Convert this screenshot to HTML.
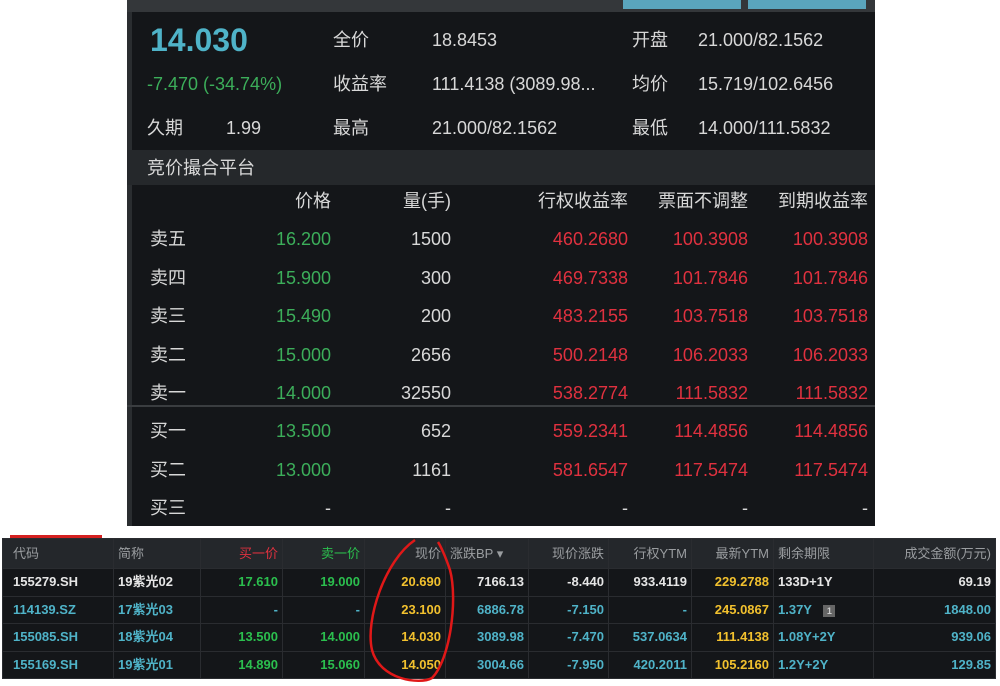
<!DOCTYPE html>
<html><head><meta charset="utf-8"><style>
*{margin:0;padding:0;box-sizing:border-box}
body{width:1000px;height:686px;background:#fff;position:relative;overflow:hidden;font-family:"Liberation Sans","Noto Sans CJK SC",sans-serif}
.p{position:absolute;left:127px;top:0;width:748px;height:526px;background:#141619;border-left:5px solid #2a2d30}
.t{position:absolute;white-space:nowrap;font-size:18px;line-height:22px;height:22px;color:#d8d8d8}
.r{text-align:right}
.g{color:#3cae5a}.rd{color:#e0313f}
table{position:absolute;left:2px;top:538px;width:994px;border-collapse:collapse;font-size:13px;line-height:16px;font-weight:bold;background:#141619}
td{height:27.5px;border:1px solid #2a2c30;padding:0 4px;text-align:right;color:#4fb3c8;white-space:nowrap}
tr.h td{background:#24272b;color:#9a9da0;font-weight:normal;height:30px}
td.l{text-align:left}
td:first-child{padding-left:10px}
.w td{color:#e6e6e6}
.gr{color:#2bbf4e!important}.y{color:#f2c12e!important}
</style></head><body>
<div class="p">
<div style="position:absolute;left:-5px;top:0;width:748px;height:12px;background:#34373a"></div>
<div style="position:absolute;left:491px;top:0;width:118px;height:9px;background:#5aa5bd"></div>
<div style="position:absolute;left:616px;top:0;width:118px;height:9px;background:#5aa5bd"></div>
<div style="position:absolute;left:-5px;top:150px;width:748px;height:35px;background:#25282b"></div>
<div style="position:absolute;left:-5px;top:405px;width:748px;height:2px;background:#3a3d40"></div>
</div>
<div class="t" style="left:150px;top:22px;font-size:32px;line-height:36px;height:36px;font-weight:bold;color:#4fb3c8">14.030</div>
<div class="t" style="left:333px;top:29px">全价</div><div class="t" style="left:432px;top:29px">18.8453</div>
<div class="t" style="left:632px;top:29px">开盘</div><div class="t" style="left:698px;top:29px">21.000/82.1562</div>
<div class="t g" style="left:147px;top:73px">-7.470 (-34.74%)</div>
<div class="t" style="left:333px;top:73px">收益率</div><div class="t" style="left:432px;top:73px">111.4138 (3089.98...</div>
<div class="t" style="left:632px;top:73px">均价</div><div class="t" style="left:698px;top:73px">15.719/102.6456</div>
<div class="t" style="left:147px;top:117px">久期</div><div class="t" style="left:226px;top:117px">1.99</div>
<div class="t" style="left:333px;top:117px">最高</div><div class="t" style="left:432px;top:117px">21.000/82.1562</div>
<div class="t" style="left:632px;top:117px">最低</div><div class="t" style="left:698px;top:117px">14.000/111.5832</div>
<div class="t" style="left:147px;top:157px">竞价撮合平台</div>
<div id="ob"></div>
<script>
var rows=[["","价格","量(手)","行权收益率","票面不调整","到期收益率"],
["卖五","16.200","1500","460.2680","100.3908","100.3908"],
["卖四","15.900","300","469.7338","101.7846","101.7846"],
["卖三","15.490","200","483.2155","103.7518","103.7518"],
["卖二","15.000","2656","500.2148","106.2033","106.2033"],
["卖一","14.000","32550","538.2774","111.5832","111.5832"],
["买一","13.500","652","559.2341","114.4856","114.4856"],
["买二","13.000","1161","581.6547","117.5474","117.5474"],
["买三","-","-","-","-","-"]];
var rx=[331,451,628,748,868],h="";
rows.forEach(function(r,i){var y=190+i*38.4;
h+='<div class="t" style="left:150px;top:'+y+'px">'+r[0]+'</div>';
for(var j=1;j<6;j++){var c=i==0?'':(j==1?'g':(j>=3?'rd':''));if(r[j]=='-')c='';
h+='<div class="t r '+c+'" style="right:'+(1000-rx[j-1])+'px;top:'+y+'px">'+r[j]+'</div>';}});
document.getElementById('ob').innerHTML=h;
</script>
<div style="position:absolute;left:10px;top:535px;width:92px;height:3px;background:#d42020"></div>
<table>
<colgroup><col style="width:111px"><col style="width:87px"><col style="width:82px"><col style="width:82px"><col style="width:81px"><col style="width:83px"><col style="width:80px"><col style="width:83px"><col style="width:82px"><col style="width:100px"><col></colgroup>
<tr class="h"><td class="l">代码</td><td class="l">简称</td><td style="color:#e0313f">买一价</td><td style="color:#2bbf4e">卖一价</td><td>现价</td><td class="l">涨跌BP ▾</td><td>现价涨跌</td><td>行权YTM</td><td>最新YTM</td><td class="l">剩余期限</td><td>成交金额(万元)</td></tr>
<tr class="w"><td class="l">155279.SH</td><td class="l">19紫光02</td><td class="gr">17.610</td><td class="gr">19.000</td><td class="y">20.690</td><td>7166.13</td><td>-8.440</td><td>933.4119</td><td class="y">229.2788</td><td class="l">133D+1Y</td><td>69.19</td></tr>
<tr><td class="l">114139.SZ</td><td class="l">17紫光03</td><td>-</td><td>-</td><td class="y">23.100</td><td>6886.78</td><td>-7.150</td><td>-</td><td class="y">245.0867</td><td class="l">1.37Y <span style="display:inline-block;width:12px;height:12px;line-height:12px;background:#666;color:#ccc;font-size:9px;text-align:center;margin-left:8px">1</span></td><td>1848.00</td></tr>
<tr><td class="l">155085.SH</td><td class="l">18紫光04</td><td class="gr">13.500</td><td class="gr">14.000</td><td class="y">14.030</td><td>3089.98</td><td>-7.470</td><td>537.0634</td><td class="y">111.4138</td><td class="l">1.08Y+2Y</td><td>939.06</td></tr>
<tr><td class="l">155169.SH</td><td class="l">19紫光01</td><td class="gr">14.890</td><td class="gr">15.060</td><td class="y">14.050</td><td>3004.66</td><td>-7.950</td><td>420.2011</td><td class="y">105.2160</td><td class="l">1.2Y+2Y</td><td>129.85</td></tr>
</table>
<svg style="position:absolute;left:0;top:0" width="1000" height="686"><path d="M415 540 C385 560 365 620 372 650 C380 680 420 685 432 678 C450 660 458 600 450 570 C445 555 440 545 438 542" fill="none" stroke="#e01818" stroke-width="2.5"/></svg>
</body></html>
